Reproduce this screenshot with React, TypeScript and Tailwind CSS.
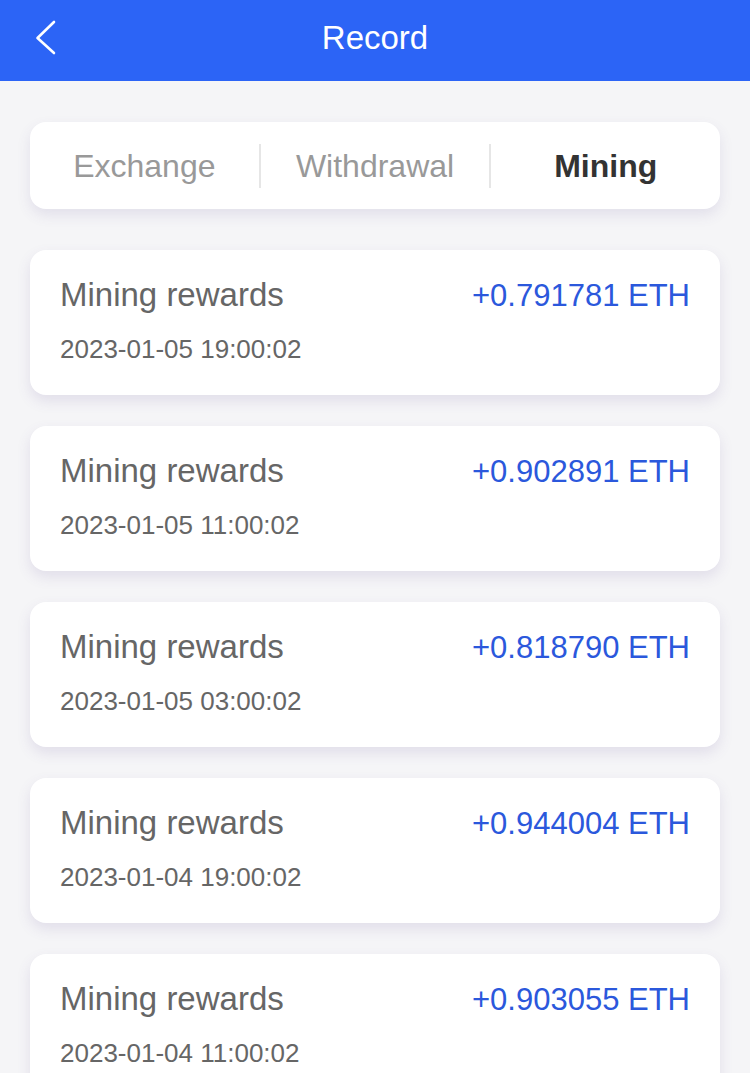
import React from "react"

const records = [
  { amount: "+0.791781 ETH", time: "2023-01-05 19:00:02" },
  { amount: "+0.902891 ETH", time: "2023-01-05 11:00:02" },
  { amount: "+0.818790 ETH", time: "2023-01-05 03:00:02" },
  { amount: "+0.944004 ETH", time: "2023-01-04 19:00:02" },
  { amount: "+0.903055 ETH", time: "2023-01-04 11:00:02" },
]

const tabs = ["Exchange", "Withdrawal", "Mining"]

export default function App() {
  const active = "Mining"
  return (
    <div
      className="min-h-[1073px] bg-[#f5f5f7] pb-10"
      style={{ fontFamily: '"Liberation Sans", Arial, sans-serif' }}
    >
      <header className="relative flex h-[81px] items-center justify-center bg-[#2c64f6] pb-[6px]">
        <button className="absolute left-[30px] top-[14px] flex h-[48px] w-[40px] items-center">
          <svg width="40" height="48" viewBox="0 0 40 48" fill="none">
            <path
              d="M24 8 L7.5 24 L24 39"
              stroke="white"
              strokeWidth="2.6"
              strokeLinecap="round"
              strokeLinejoin="round"
            />
          </svg>
        </button>
        <h1 className="text-[33px] leading-none text-white">Record</h1>
      </header>

      <div className="mx-[30px] mt-[41px] flex h-[87px] items-center rounded-[16px] bg-white shadow-[0_6px_14px_rgba(90,70,150,0.12)]">
        {tabs.map((t, i) => (
          <React.Fragment key={t}>
            {i > 0 && <span className="h-[44px] w-[2px] bg-[#e6e6e6]" />}
            <div
              className={`flex-1 text-center text-[32px] ${
                t === active ? "font-bold text-[#333]" : "text-[#999]"
              }`}
            >
              {t}
            </div>
          </React.Fragment>
        ))}
      </div>

      <div className="mx-[30px] mt-[41px] flex flex-col gap-[31px]">
        {records.map((r) => (
          <div
            key={r.time}
            className="h-[145px] rounded-[16px] bg-white px-[30px] pt-[25px] shadow-[0_6px_14px_rgba(90,70,150,0.13)]"
          >
            <div className="flex h-[40px] items-baseline justify-between">
              <span className="text-[33px] leading-[40px] text-[#666]">
                Mining rewards
              </span>
              <span className="text-[31px] leading-[40px] text-[#2b58dc]">
                {r.amount}
              </span>
            </div>
            <div className="mt-[18px] text-[26px] leading-[32px] text-[#666]">
              {r.time}
            </div>
          </div>
        ))}
      </div>
    </div>
  )
}
